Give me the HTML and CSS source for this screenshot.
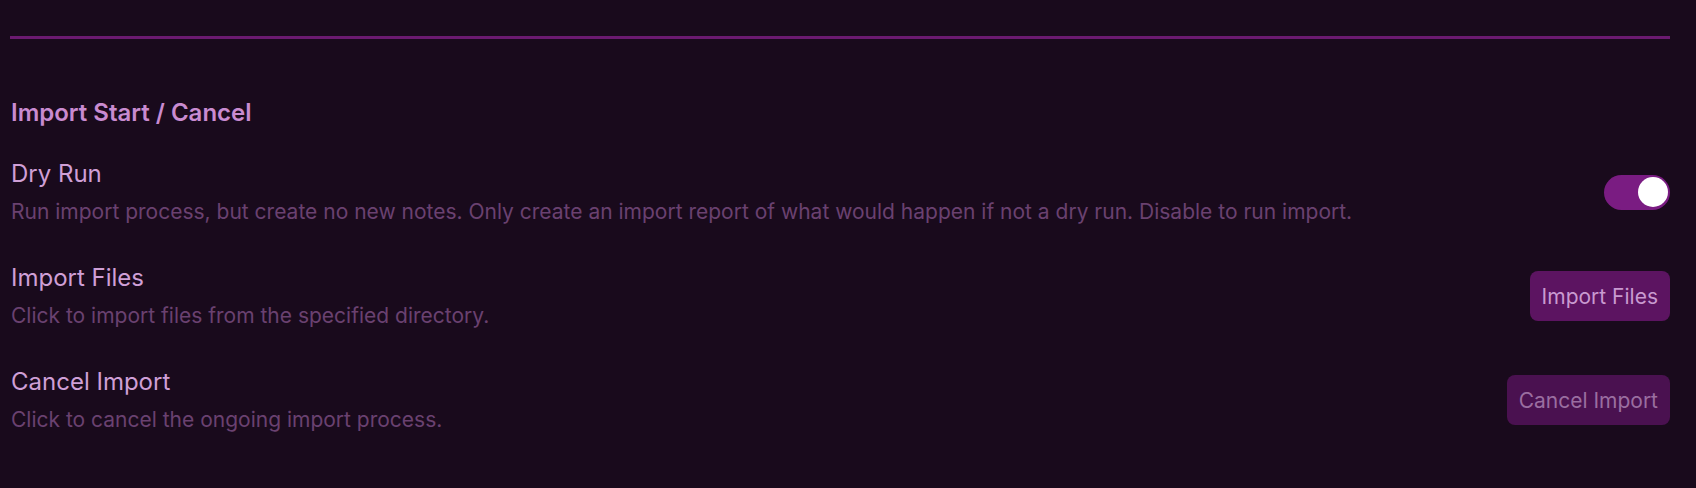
FILE: index.html
```html
<!DOCTYPE html>
<html lang="en">
<head>
<meta charset="utf-8">
<title>Import Start / Cancel</title>
<link rel="stylesheet" href="styles.css">
</head>
<body>
<div class="page">
  <div class="divider"></div>
  <div class="heading">Import Start / Cancel</div>
  <div class="setting">
    <div class="info">
      <div class="name">Dry Run</div>
      <div class="desc">Run import process, but create no new notes. Only create an import report of what would happen if not a dry run. Disable to run import.</div>
    </div>
    <div class="control">
      <div class="toggle"><div class="knob"></div></div>
    </div>
  </div>
  <div class="setting">
    <div class="info">
      <div class="name">Import Files</div>
      <div class="desc">Click to import files from the specified directory.</div>
    </div>
    <div class="control">
      <button class="btn btn-primary">Import Files</button>
    </div>
  </div>
  <div class="setting">
    <div class="info">
      <div class="name">Cancel Import</div>
      <div class="desc">Click to cancel the ongoing import process.</div>
    </div>
    <div class="control">
      <button class="btn btn-muted">Cancel Import</button>
    </div>
  </div>
</div>
</body>
</html>
```

FILE: styles.css
```css
html, body {
  margin: 0;
  padding: 0;
  background: #190a1c;
  height: 100%;
}
body {
  font-family: Inter, "Noto Sans", "Liberation Sans", sans-serif;
  -webkit-font-smoothing: antialiased;
}
.page {
  padding: 36px 26px 0 10px;
}
.divider {
  height: 3px;
  background: #6b1a70;
}
.heading {
  margin-top: 59px;
  font-size: 24px;
  line-height: 30px;
  font-weight: 600;
  color: #c98bd0;
  padding-left: 1px;
}
.setting {
  display: flex;
  align-items: center;
  justify-content: space-between;
  padding: 19px 0;
}
.heading + .setting {
  margin-top: 12px;
}
.info {
  display: flex;
  flex-direction: column;
  gap: 9px;
  padding-left: 1px;
}
.name {
  font-size: 24px;
  line-height: 30px;
  color: #cf9fd6;
}
.desc {
  font-size: 21px;
  line-height: 27px;
  color: #6a4170;
}
.control {
  display: flex;
  align-items: center;
}
.toggle {
  width: 66px;
  height: 35px;
  border-radius: 18px;
  background: #7a1c82;
  display: flex;
  align-items: center;
  justify-content: flex-end;
  padding: 0 2px;
  box-sizing: border-box;
}
.knob {
  width: 30px;
  height: 30px;
  border-radius: 50%;
  background: #ffffff;
}
.btn {
  height: 50px;
  padding: 0 12px;
  border: none;
  border-radius: 8px;
  font-family: Inter, "Noto Sans", "Liberation Sans", sans-serif;
  font-size: 21px;
}
.btn-primary {
  background: #5c1461;
  color: #c99ad0;
}
.btn-muted {
  background: #4a1150;
  color: #9a6ea0;
}
```
